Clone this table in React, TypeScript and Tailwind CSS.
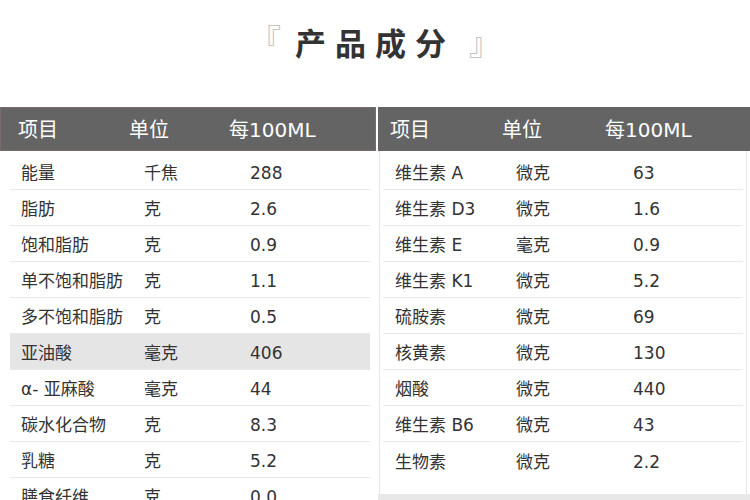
const left = [
  ["能量", "千焦", "288"],
  ["脂肪", "克", "2.6"],
  ["饱和脂肪", "克", "0.9"],
  ["单不饱和脂肪", "克", "1.1"],
  ["多不饱和脂肪", "克", "0.5"],
  ["亚油酸", "毫克", "406"],
  ["α- 亚麻酸", "毫克", "44"],
  ["碳水化合物", "克", "8.3"],
  ["乳糖", "克", "5.2"],
  ["膳食纤维", "克", "0.0"],
]

const right = [
  ["维生素 A", "微克", "63"],
  ["维生素 D3", "微克", "1.6"],
  ["维生素 E", "毫克", "0.9"],
  ["维生素 K1", "微克", "5.2"],
  ["硫胺素", "微克", "69"],
  ["核黄素", "微克", "130"],
  ["烟酸", "微克", "440"],
  ["维生素 B6", "微克", "43"],
  ["生物素", "微克", "2.2"],
]

const font = { fontFamily: '"DejaVu Sans", "Noto Sans CJK SC", sans-serif' }

export default function App() {
  return (
    <div className="w-[750px] h-[500px] overflow-hidden bg-white text-[#333]" style={font}>
      {/* Title */}
      <div className="h-[107px] flex justify-center pt-[20px]">
        <div
          className="flex items-center h-[44px] text-[31px] font-bold"
          style={{ fontFamily: '"Noto Sans CJK SC", sans-serif' }}
        >
          <span className="text-[#c4c4c4] font-normal -mt-[8px] mr-[14px]">『</span>
          <span className="tracking-[9px] text-[#333]">产品成分</span>
          <span className="text-[#c4c4c4] font-normal mt-[0px] ml-[14px]">』</span>
        </div>
      </div>

      <div className="flex gap-[2px]">
        {/* Left table */}
        <div className="w-[376px] shrink-0">
          <div className="h-[44px] bg-[#646464] border border-[#7b6c67] flex items-center pl-[17px] pt-[2px] text-white text-[20px]">
            <span className="w-[111px]">项目</span>
            <span className="w-[100px]">单位</span>
            <span>每100ML</span>
          </div>
          <div className="pt-[3px]">
            {left.map((r, i) => (
              <div
                key={i}
                className={`ml-[10px] mr-[6px] h-[36px] flex items-center pl-[11px] pt-[5px] text-[17px] border-b border-[#e9e9e9] ${
                  i === 5 ? "bg-[#e5e5e5]" : ""
                }`}
              >
                <span className="w-[123px]">{r[0]}</span>
                <span className="w-[106px]">{r[1]}</span>
                <span>{r[2]}</span>
              </div>
            ))}
          </div>
        </div>

        {/* Right table */}
        <div className="flex-1">
          <div className="h-[44px] bg-[#646464] flex items-center pl-[12px] pt-[2px] text-white text-[20px]">
            <span className="w-[112px]">项目</span>
            <span className="w-[103px]">单位</span>
            <span>每100ML</span>
          </div>
          <div className="ml-[1px] mr-[3px] border-l border-r border-[#e6e6e6] pt-[3px] pb-[16px]">
            {right.map((r, i) => (
              <div
                key={i}
                className={`mx-[3px] h-[36px] flex items-center pl-[12px] pt-[5px] text-[17px] ${
                  i < right.length - 1 ? "border-b border-[#e9e9e9]" : ""
                }`}
              >
                <span className="w-[121px]">{r[0]}</span>
                <span className="w-[117px]">{r[1]}</span>
                <span>{r[2]}</span>
              </div>
            ))}
          </div>
          <div className="h-[20px] bg-[#e8e8e8]" />
        </div>
      </div>
    </div>
  )
}
